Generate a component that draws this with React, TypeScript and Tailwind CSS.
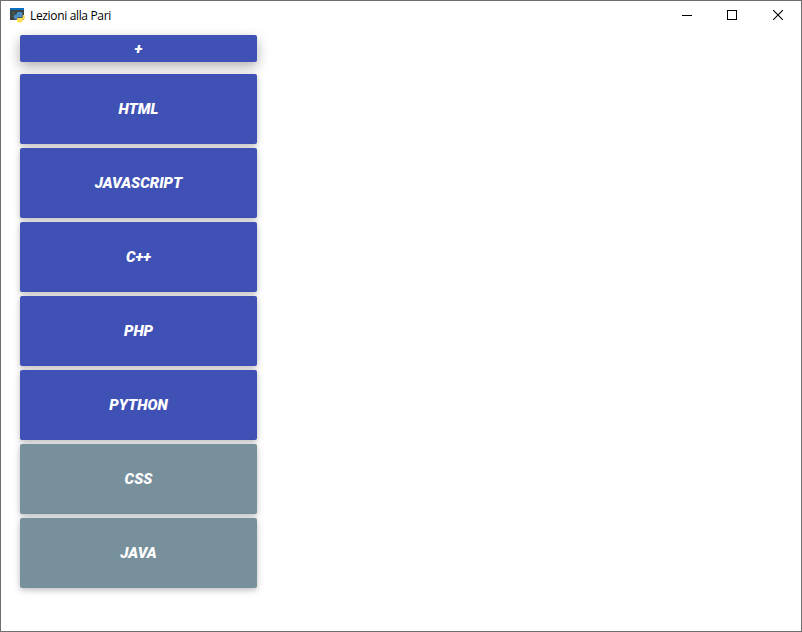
const lessons = [
  { name: 'HTML', active: true },
  { name: 'JAVASCRIPT', active: true },
  { name: 'C++', active: true },
  { name: 'PHP', active: true },
  { name: 'PYTHON', active: true },
  { name: 'CSS', active: false },
  { name: 'JAVA', active: false },
];

function AppIcon() {
  return (
    <svg width="16" height="16" viewBox="0 0 16 16">
      <rect x="1" y="0" width="14" height="12" fill="#3c4245" />
      <rect x="1" y="0" width="14" height="2" fill="#0a6fc2" />
      <path d="M3 4.500h3M3 6.500h2M3 8.500h2" stroke="#4a6b4c" strokeWidth="1" />
      <path d="M8.800 4h3q1.700 0 1.700 1.700v2.300q0 1.200-1.200 1.200H9.200q-1.200 0-1.200 1.200v1.200H6.800q-1.800 0-1.800-2.600T6.800 6.600h1V5q0-1 1-1z" fill="#4b8fc4" />
      <path d="M12 14.500H9.600q-1.600 0-1.600-1.400v-1.800q0-1.300 1.300-1.300h3.200q1.300 0 1.300-1.300V7h.7q1.500 0 1.500 2.300T14.500 11.800h-1.100v1.300q0 1.400-1.400 1.400z" fill="#ffdc55" />
    </svg>
  );
}

function TitleBar() {
  return (
    <header className="flex h-[30px] items-start justify-between">
      <div className="flex h-[30px] items-center gap-1 pl-2 font-['Open_Sans','Noto_Sans',sans-serif] text-[12px] tracking-[-0.34px] text-black">
        <AppIcon />
        <h1 className="pl-px leading-4">Lezioni alla Pari</h1>
      </div>
      <div className="flex text-black">
        <button className="flex h-7 w-[45px] items-center justify-center" aria-label="Minimize">
          <svg width="10" height="10" viewBox="0 0 10 10"><rect y="5" width="10" height="1" /></svg>
        </button>
        <button className="flex h-7 w-[46px] items-center justify-center" aria-label="Maximize">
          <svg width="10" height="10" viewBox="0 0 10 10"><rect x=".5" y=".5" width="9" height="9" fill="none" stroke="#000" /></svg>
        </button>
        <button className="flex h-7 w-[46px] items-center justify-center" aria-label="Close">
          <svg width="10" height="10" viewBox="0 0 10 10"><path d="M0 0L10 10M10 0L0 10" stroke="#000" strokeWidth="1.1" /></svg>
        </button>
      </div>
    </header>
  );
}

export default function App() {
  return (
    <div className="flex h-[632px] w-[802px] flex-col overflow-hidden border border-[#6f6f6f] bg-white">
      <TitleBar />
      <main className="w-[256px] pl-[19px] pt-1 font-['Roboto',sans-serif] font-black italic text-white">
        <button className="flex h-[27px] w-full items-center justify-center rounded-[2px] bg-[#3f51b5] pt-px text-[15px] shadow-[0_5px_11px_0_rgba(0,0,0,0.18),0_4px_15px_0_rgba(0,0,0,0.15)]">
          +
        </button>
        <div className="mt-3 flex flex-col gap-1">
          {lessons.map((lesson) => (
            <button
              key={lesson.name}
              className={`flex h-[70px] w-full items-center justify-center rounded-[2px] text-[15px] shadow-[0_2px_5px_0_rgba(0,0,0,0.16),0_2px_10px_0_rgba(0,0,0,0.12)] ${lesson.active ? 'bg-[#3f51b5]' : 'bg-[#78909c]'}`}
            >
              {lesson.name}
            </button>
          ))}
        </div>
      </main>
    </div>
  );
}
